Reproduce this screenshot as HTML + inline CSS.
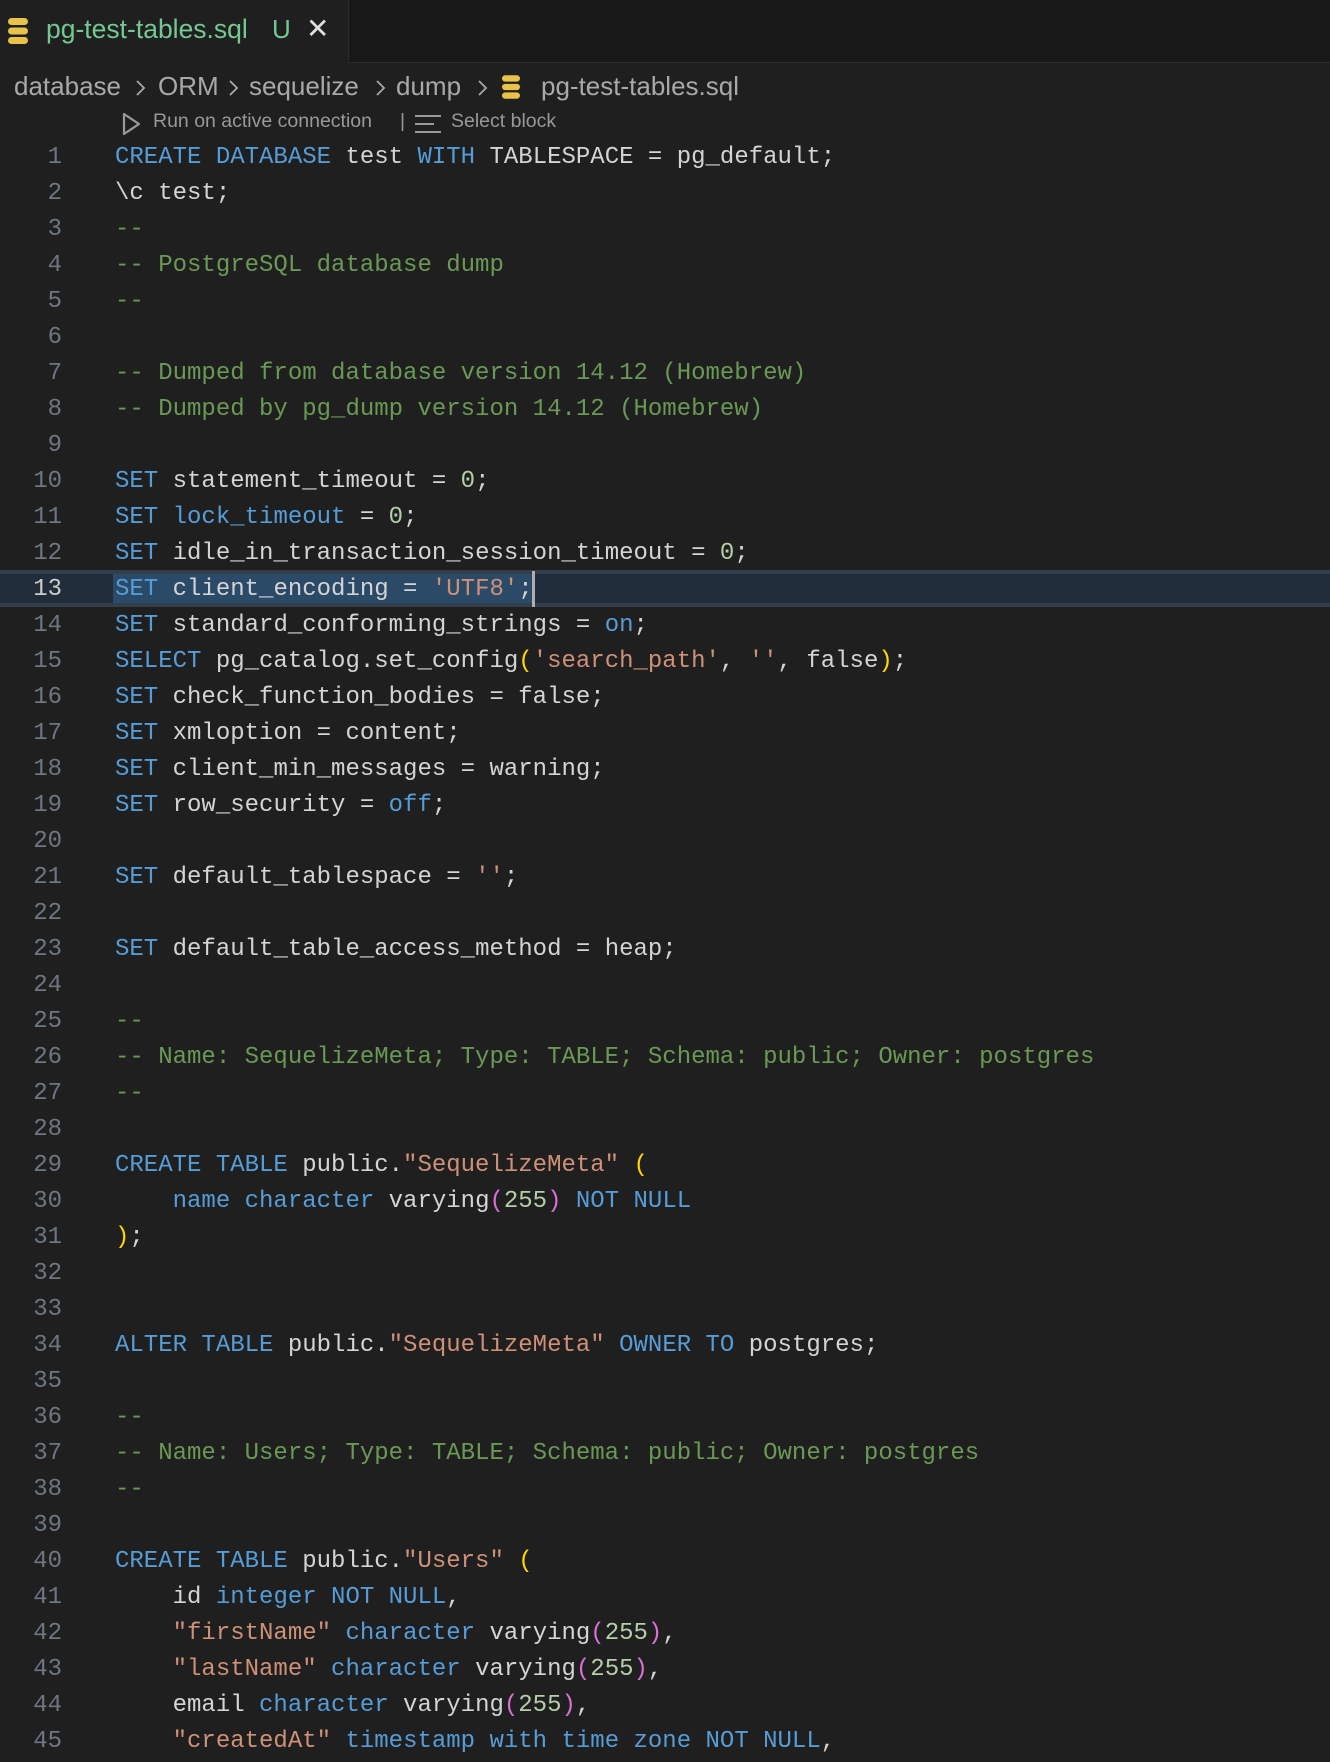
<!DOCTYPE html>
<html><head><meta charset="utf-8"><style>
body{margin:0;width:1330px;height:1762px;background:#1f1f1f;overflow:hidden;font-family:"Liberation Sans",sans-serif;position:relative}
.tabbar{position:absolute;left:0;top:0;width:1330px;height:63px;background:#181818;border-bottom:1px solid #2b2b2b;box-sizing:border-box}
.tab{position:absolute;left:0;top:0;width:348px;height:63px;background:#1f1f1f;border-right:1px solid #2b2b2b}
.tab .t{position:absolute;left:46px;top:14px;font-size:26.5px;color:#73c991;white-space:nowrap}
.tab .u{position:absolute;left:272px;top:14px;font-size:26px;color:#73c991}
.tab .x{position:absolute;left:306px;top:12px;font-size:28px;color:#e0e0e0}
.b{position:absolute;top:71px;font-size:26px;color:#a9a9a9;white-space:pre}
.l{position:absolute;top:110px;font-size:19.5px;color:#999;white-space:pre}
.code{position:absolute;left:0;top:140px;font-family:"Liberation Mono",monospace;font-size:24px;line-height:36px;color:#d4d4d4;white-space:pre}
.ln{position:absolute;left:0;width:62px;text-align:right;color:#6e7681}
.tx{position:absolute;left:115px}
.k{color:#569cd6}.c{color:#6a9955}.s{color:#ce9178}.n{color:#b5cea8}.y{color:#ffd700}.p{color:#da70d6}
.cur{position:absolute;left:0;top:570px;width:1330px;height:37px;background:#222d3c;border-top:4px solid #323e4b;border-bottom:4px solid #323e4b;box-sizing:border-box}
.sel{position:absolute;left:113px;top:574px;width:420px;height:29px;background:#2b4a68}
.caret{position:absolute;left:532px;top:571px;width:3px;height:36px;background:#aeafad}
</style></head><body>
<div class="tabbar"><div class="tab">
<svg style="position:absolute;left:8px;top:18px" width="20" height="26" viewBox="0 0 20 26"><g fill="#e8c249"><rect x="0" y="0" width="20" height="7" rx="3.5"/><rect x="0" y="9.5" width="20" height="7" rx="3.5"/><rect x="0" y="19" width="20" height="7" rx="3.5"/></g></svg>
<span class="t">pg-test-tables.sql</span><span class="u">U</span><span class="x">✕</span></div></div>
<span class="b" style="left:14px">database</span>
<span class="b" style="left:158px">ORM</span>
<span class="b" style="left:249px">sequelize</span>
<span class="b" style="left:396px">dump</span>
<span class="b" style="left:541px">pg-test-tables.sql</span>
<svg style="position:absolute;left:0;top:76px" width="500" height="24"><g fill="none" stroke="#a9a9a9" stroke-width="1.8"><path d="M137 5 L144 12 L137 19"/><path d="M230 5 L237 12 L230 19"/><path d="M377 5 L384 12 L377 19"/><path d="M479 5 L486 12 L479 19"/></g></svg>
<svg style="position:absolute;left:502px;top:75px" width="18" height="24" viewBox="0 0 20 26"><g fill="#e8c249"><rect x="0" y="0" width="20" height="7" rx="3.5"/><rect x="0" y="9.5" width="20" height="7" rx="3.5"/><rect x="0" y="19" width="20" height="7" rx="3.5"/></g></svg>
<svg style="position:absolute;left:122px;top:112px" width="20" height="24" viewBox="0 0 20 24"><path d="M2 2 L17 12 L2 22 Z" fill="none" stroke="#999" stroke-width="2.2" stroke-linejoin="round"/></svg>
<span class="l" style="left:153px">Run on active connection</span>
<span class="l" style="left:400px">|</span>
<svg style="position:absolute;left:414px;top:113px" width="28" height="22" viewBox="0 0 28 22"><g stroke="#999" stroke-width="2"><line x1="1" y1="3" x2="27" y2="3"/><line x1="1" y1="11" x2="20" y2="11"/><line x1="1" y1="19" x2="27" y2="19"/></g></svg>
<span class="l" style="left:451px">Select block</span>
<div class="cur"></div><div class="sel"></div><div class="caret"></div>
<div class="code" id="c"></div>
<script>
var L=[
'<span class="k">CREATE DATABASE</span> test <span class="k">WITH</span> TABLESPACE = pg_default;',
'\\c test;',
'<span class="c">--</span>',
'<span class="c">-- PostgreSQL database dump</span>',
'<span class="c">--</span>',
'',
'<span class="c">-- Dumped from database version 14.12 (Homebrew)</span>',
'<span class="c">-- Dumped by pg_dump version 14.12 (Homebrew)</span>',
'',
'<span class="k">SET</span> statement_timeout = <span class="n">0</span>;',
'<span class="k">SET</span> <span class="k">lock_timeout</span> = <span class="n">0</span>;',
'<span class="k">SET</span> idle_in_transaction_session_timeout = <span class="n">0</span>;',
'<span class="k">SET</span> client_encoding = <span class="s">\'UTF8\'</span>;',
'<span class="k">SET</span> standard_conforming_strings = <span class="k">on</span>;',
'<span class="k">SELECT</span> pg_catalog.set_config<span class="y">(</span><span class="s">\'search_path\'</span>, <span class="s">\'\'</span>, false<span class="y">)</span>;',
'<span class="k">SET</span> check_function_bodies = false;',
'<span class="k">SET</span> xmloption = content;',
'<span class="k">SET</span> client_min_messages = warning;',
'<span class="k">SET</span> row_security = <span class="k">off</span>;',
'',
'<span class="k">SET</span> default_tablespace = <span class="s">\'\'</span>;',
'',
'<span class="k">SET</span> default_table_access_method = heap;',
'',
'<span class="c">--</span>',
'<span class="c">-- Name: SequelizeMeta; Type: TABLE; Schema: public; Owner: postgres</span>',
'<span class="c">--</span>',
'',
'<span class="k">CREATE TABLE</span> public.<span class="s">"SequelizeMeta"</span> <span class="y">(</span>',
'    <span class="k">name character</span> varying<span class="p">(</span><span class="n">255</span><span class="p">)</span> <span class="k">NOT NULL</span>',
'<span class="y">)</span>;',
'',
'',
'<span class="k">ALTER TABLE</span> public.<span class="s">"SequelizeMeta"</span> <span class="k">OWNER TO</span> postgres;',
'',
'<span class="c">--</span>',
'<span class="c">-- Name: Users; Type: TABLE; Schema: public; Owner: postgres</span>',
'<span class="c">--</span>',
'',
'<span class="k">CREATE TABLE</span> public.<span class="s">"Users"</span> <span class="y">(</span>',
'    id <span class="k">integer NOT NULL</span>,',
'    <span class="s">"firstName"</span> <span class="k">character</span> varying<span class="p">(</span><span class="n">255</span><span class="p">)</span>,',
'    <span class="s">"lastName"</span> <span class="k">character</span> varying<span class="p">(</span><span class="n">255</span><span class="p">)</span>,',
'    email <span class="k">character</span> varying<span class="p">(</span><span class="n">255</span><span class="p">)</span>,',
'    <span class="s">"createdAt"</span> <span class="k">timestamp with time zone NOT NULL</span>,'
];
var h='';for(var i=0;i<L.length;i++){var t=i*36;h+='<div class="ln" style="top:'+t+'px'+(i==12?';color:#ccc':'')+'">'+(i+1)+'</div><div class="tx" style="top:'+t+'px">'+L[i]+'</div>';}
document.getElementById('c').innerHTML=h;
</script>
</body></html>
